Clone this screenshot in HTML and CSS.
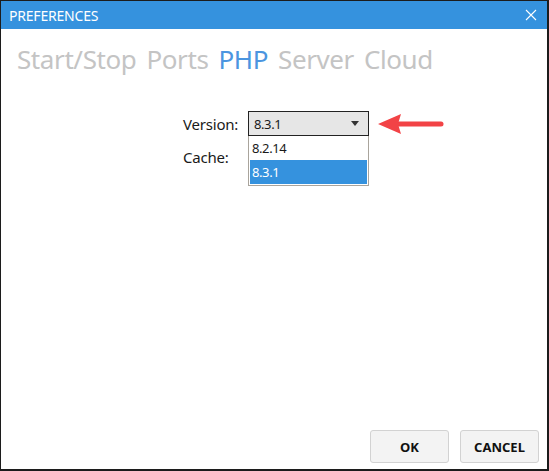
FILE: index.html
```html
<!DOCTYPE html>
<html lang="en">

<head>
    <meta charset="UTF-8">
    <title>Preferences</title>
    <link rel="stylesheet" href="styles.css">
</head>

<body>
    <div class="window">
        <header class="titlebar">
            <span class="title">PREFERENCES</span>
            <svg class="close" width="12" height="12" viewBox="0 0 12 12">
                <path d="M1 1 L11 11 M11 1 L1 11" stroke="#fff" stroke-width="1.1" fill="none" />
            </svg>
        </header>

        <nav class="tabs">
            <span class="tab">Start/Stop</span>
            <span class="tab">Ports</span>
            <span class="tab active">PHP</span>
            <span class="tab">Server</span>
            <span class="tab">Cloud</span>
        </nav>

        <section class="form">
            <div class="row">
                <label class="label">Version:</label>
                <div class="select-wrap">
                    <div class="select">
                        <span>8.3.1</span>
                        <svg width="8" height="5" viewBox="0 0 8 5">
                            <path d="M0 0 L8 0 L4 5 Z" fill="#333" />
                        </svg>
                    </div>
                    <ul class="options">
                        <li>8.2.14</li>
                        <li class="selected">8.3.1</li>
                    </ul>
                </div>
                <svg class="arrow" width="66" height="20" viewBox="0 0 66 20">
                    <path d="M20 10 L63 10" stroke="#f24346" stroke-width="5" stroke-linecap="round" />
                    <path d="M0 10 L23 0 L20 10 L23 20 Z" fill="#f24346" />
                </svg>
            </div>
            <div class="row">
                <label class="label">Cache:</label>
            </div>
        </section>

        <footer class="buttons">
            <button class="btn">OK</button>
            <button class="btn">CANCEL</button>
        </footer>
    </div>
</body>

</html>
```

FILE: styles.css
```css
body {
    margin: 0;
    font-family: "Noto Sans", "Open Sans", sans-serif;
    background-color: white;
}

.window {
    box-sizing: border-box;
    width: 549px;
    height: 471px;
    border: 1px solid #1c1c1c;
    border-right-width: 2px;
    border-bottom-width: 2px;
    display: flex;
    flex-direction: column;
}

.titlebar {
    height: 28px;
    background-color: #3592de;
    color: white;
    display: flex;
    align-items: center;
    justify-content: space-between;
    padding: 0 10px 0 8px;
}

.title {
    font-size: 14px;
    letter-spacing: -0.2px;
}

.tabs {
    display: flex;
    gap: 10px;
    padding-left: 16px;
    margin-top: 11px;
    font-size: 26px;
    line-height: 38px;
    letter-spacing: -0.4px;
}

.tab {
    color: #c4c4c4;
}

.tab.active {
    color: #4b95e0;
}

.form {
    margin-top: 33px;
    padding-left: 182px;
    font-size: 15px;
    color: #1a1a1a;
}

.row {
    display: flex;
    align-items: center;
    height: 25px;
    margin-bottom: 8px;
}

.label {
    width: 65px;
    letter-spacing: -0.2px;
}

.select-wrap {
    position: relative;
}

.select {
    box-sizing: border-box;
    width: 121px;
    height: 25px;
    border: 1px solid #222;
    background-color: #e6e6e6;
    display: flex;
    align-items: center;
    justify-content: space-between;
    padding: 0 9px 0 5px;
    font-size: 13px;
    letter-spacing: -0.4px;
}

.options {
    position: absolute;
    left: 0;
    top: 25px;
    box-sizing: border-box;
    width: 121px;
    margin: 0;
    padding: 0;
    list-style: none;
    background-color: white;
    border: 1px solid #a9a49c;
    border-top: none;
    font-size: 13px;
    letter-spacing: -0.4px;
    z-index: 5;
}

.options li {
    height: 24px;
    line-height: 24px;
    padding-left: 3px;
}

.options li.selected {
    background-color: #3592de;
    color: white;
    margin: 0 1px 1px 1px;
    padding-left: 2px;
}

.arrow {
    margin-left: 9px;
}

.buttons {
    margin-top: auto;
    display: flex;
    justify-content: flex-end;
    gap: 11px;
    padding: 0 8px 6px 0;
}

.btn {
    width: 79px;
    height: 33px;
    border: 1px solid #d2d2d2;
    border-radius: 3px;
    background-color: #f3f3f3;
    font-family: "Noto Sans", "Open Sans", sans-serif;
    font-weight: bold;
    font-size: 13px;
    color: #111;
}
```
